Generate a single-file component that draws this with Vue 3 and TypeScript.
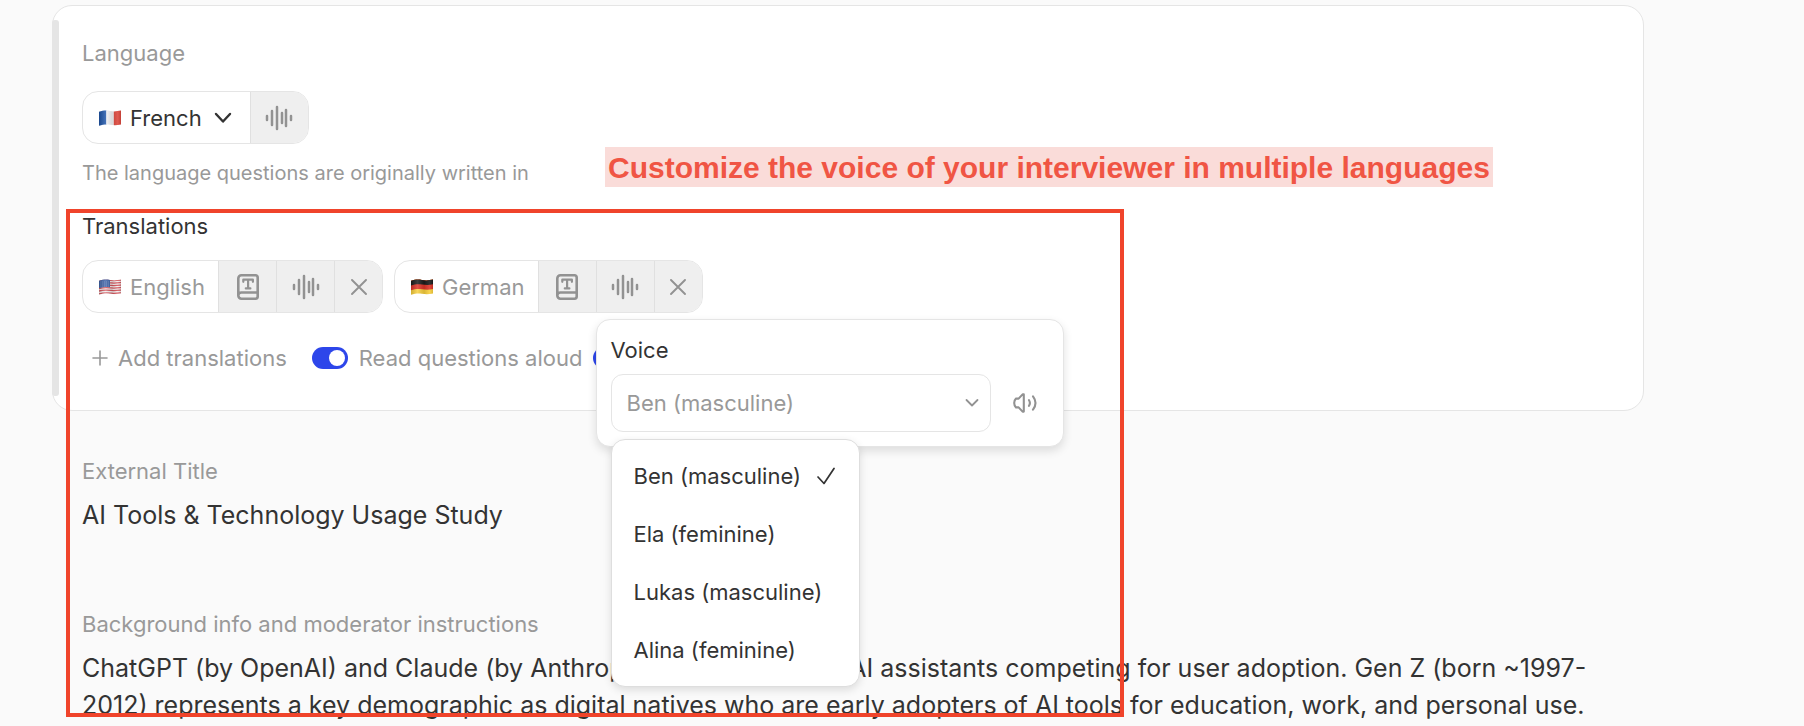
<script setup lang="ts">
import { ref } from 'vue'

type Flag = 'fr' | 'us' | 'de'

interface Translation {
  name: string
  flag: Flag
  voiceOpen: boolean
}

const translations: Translation[] = [
  { name: 'English', flag: 'us', voiceOpen: false },
  { name: 'German', flag: 'de', voiceOpen: true },
]

const voices: string[] = ['Ben (masculine)', 'Ela (feminine)', 'Lukas (masculine)', 'Alina (feminine)']

const voice = ref(voices[0])
const readAloud = ref(true)
const voiceAnswers = ref(true)

// Bars of the waveform icon: [x, half height]
const bars: [number, number][] = [
  [2, 2],
  [7, 7],
  [12, 11],
  [17, 5],
  [21, 8],
  [26, 2],
]
</script>

<template>
  <svg class="defs" aria-hidden="true">
    <defs>
      <clipPath id="wave-flag">
        <path d="M0 1.8C4 .6 7 .2 11 1S18 1.4 22 .6V14.4C18 15.4 15 15.4 11 14.8S4 14.6 0 15.8Z" />
      </clipPath>
      <linearGradient id="shade" x1="0" x2="1" y1="0" y2="0">
        <stop offset="0" stop-color="#000" stop-opacity=".16" />
        <stop offset=".3" stop-color="#fff" stop-opacity=".16" />
        <stop offset=".6" stop-color="#000" stop-opacity=".12" />
        <stop offset=".85" stop-color="#fff" stop-opacity=".1" />
        <stop offset="1" stop-color="#000" stop-opacity=".12" />
      </linearGradient>
      <symbol id="flag-fr" viewBox="0 0 22 16">
        <g clip-path="url(#wave-flag)">
          <rect width="7.4" height="16" fill="#1f55a8" />
          <rect x="7.4" width="7.4" height="16" fill="#f6f6f8" />
          <rect x="14.8" width="7.2" height="16" fill="#dc473c" />
          <rect width="22" height="16" fill="url(#shade)" />
        </g>
      </symbol>
      <symbol id="flag-us" viewBox="0 0 22 16">
        <g clip-path="url(#wave-flag)">
          <rect width="22" height="16" fill="#f3eeee" />
          <path
            d="M0 2C5 .6 8 1 12 1.4S18 1.5 22 1M0 4.5C5 3.1 8 3.5 12 3.9S18 4 22 3.5M0 7C5 5.6 8 6 12 6.4S18 6.5 22 6M0 9.5C5 8.1 8 8.5 12 8.9S18 9 22 8.5M0 12C5 10.6 8 11 12 11.4S18 11.5 22 11M0 14.8C5 13.4 8 13.8 12 14.2S18 14.3 22 13.8"
            fill="none"
            stroke="#d4535a"
            stroke-width="1.3"
          />
          <path d="M0 0H11V8.2C7 7.6 4 8 0 9Z" fill="#3e62a6" />
          <path d="M1.5 3H10M1.5 5H10M1.5 7H10" stroke="#b7c6e2" stroke-width=".6" stroke-dasharray=".7 1.2" />
          <rect width="22" height="16" fill="url(#shade)" />
        </g>
      </symbol>
      <symbol id="flag-de" viewBox="0 0 22 16">
        <g clip-path="url(#wave-flag)">
          <rect width="22" height="16" fill="#f8cf3c" />
          <path d="M0 0H22V10C18 11 15 10.8 11 10.3S4 10 0 11.2Z" fill="#dd3327" />
          <path d="M0 0H22V5.2C18 6.2 15 6 11 5.5S4 5.2 0 6.4Z" fill="#1b1b1b" />
          <rect width="22" height="16" fill="url(#shade)" />
        </g>
      </symbol>
      <symbol id="wave" viewBox="0 0 28 26">
        <path
          v-for="[x, h] in bars"
          :key="x"
          :d="`M${x} ${13 - h}V${13 + h}`"
          fill="none"
          stroke="currentColor"
          stroke-width="2.5"
          stroke-linecap="round"
        />
      </symbol>
      <symbol id="book" viewBox="0 0 22 26">
        <g fill="none" stroke="currentColor" stroke-linecap="round" stroke-linejoin="round">
          <path
            stroke-width="2.6"
            d="M1.3 21.6V4.4A3.1 3.1 0 0 1 4.4 1.3H18.6A2.1 2.1 0 0 1 20.7 3.4V22.6A2.1 2.1 0 0 1 18.6 24.7H4.4A3.1 3.1 0 0 1 4.4 18.5H20.7"
          />
          <path stroke-width="2.2" d="M6.3 7.8V5.7H15.9V7.8M11.1 5.7V14.4M8.8 14.4H13.4" />
        </g>
      </symbol>
    </defs>
  </svg>

  <main class="page">
    <section class="card">
      <h2 class="label muted">Language</h2>
      <div class="chip source">
        <button type="button" class="chip-main picker">
          <svg class="flag" aria-hidden="true"><use href="#flag-fr" /></svg>
          French
          <svg class="caret" viewBox="0 0 18 12" aria-hidden="true">
            <path d="M2 2L9 9.5L16 2" fill="none" stroke="currentColor" stroke-width="2.4" stroke-linecap="round" stroke-linejoin="round" />
          </svg>
        </button>
        <button type="button" class="tool" aria-label="French voice">
          <svg class="wave"><use href="#wave" /></svg>
        </button>
      </div>
      <p class="hint">The language questions are originally written in</p>

      <h2 class="label">Translations</h2>
      <div class="chips">
        <div v-for="t in translations" :key="t.name" class="chip">
          <span class="chip-main">
            <svg class="flag" aria-hidden="true"><use :href="`#flag-${t.flag}`" /></svg>
            {{ t.name }}
          </span>
          <button type="button" class="tool" :aria-label="`Edit ${t.name} text`">
            <svg class="book"><use href="#book" /></svg>
          </button>
          <div class="anchor">
            <button type="button" class="tool" :aria-label="`${t.name} voice`" :aria-expanded="t.voiceOpen">
              <svg class="wave"><use href="#wave" /></svg>
            </button>
            <div v-if="t.voiceOpen" class="popover">
              <label class="label" for="voice">Voice</label>
              <div class="voice-row">
                <div class="select">
                  <select id="voice" v-model="voice">
                    <option v-for="v in voices" :key="v" :value="v">{{ v }}</option>
                  </select>
                  <svg class="select-caret" viewBox="0 0 14 10" aria-hidden="true">
                    <path d="M1.5 2L7 7.5L12.5 2" fill="none" stroke="currentColor" stroke-width="1.8" stroke-linecap="round" stroke-linejoin="round" />
                  </svg>
                  <div class="menu" role="listbox" aria-label="Voices">
                    <button
                      v-for="v in voices"
                      :key="v"
                      type="button"
                      class="option"
                      role="option"
                      :aria-selected="v === voice"
                      @click="voice = v"
                    >
                      {{ v }}
                      <svg v-if="v === voice" class="check" viewBox="0 0 18 18" aria-hidden="true">
                        <path d="M1 10L7 16.5L17 1.5" fill="none" stroke="currentColor" stroke-width="1.7" stroke-linecap="round" stroke-linejoin="round" />
                      </svg>
                    </button>
                  </div>
                </div>
                <button type="button" class="preview" aria-label="Play voice sample">
                  <svg viewBox="0 0 24 20" aria-hidden="true">
                    <g fill="none" stroke="currentColor" stroke-width="2.1" stroke-linecap="round" stroke-linejoin="round">
                      <path d="M10.8 1.4V18.6H9.6L5.6 14.4H3Q1.2 12.6 1.2 10T3 5.6H5.6L9.6 1.4Z" />
                      <path d="M16 7.2Q17.8 10 16 12.8M20 3.4Q25 10 20 16.6" />
                    </g>
                  </svg>
                </button>
              </div>
            </div>
          </div>
          <button type="button" class="tool close" :aria-label="`Remove ${t.name}`">
            <svg class="cross" viewBox="0 0 16 16">
              <path d="M1 1L15 15M15 1L1 15" fill="none" stroke="currentColor" stroke-width="1.9" stroke-linecap="round" />
            </svg>
          </button>
        </div>
      </div>

      <div class="actions">
        <button type="button" class="add">
          <svg viewBox="0 0 16 16" aria-hidden="true">
            <path d="M8 1V15M1 8H15" fill="none" stroke="currentColor" stroke-width="1.6" stroke-linecap="round" />
          </svg>
          Add translations
        </button>
        <label class="switch">
          <input v-model="readAloud" type="checkbox" />
          Read questions aloud
        </label>
        <input v-model="voiceAnswers" type="checkbox" aria-label="Voice answers" />
      </div>
    </section>

    <section class="field">
      <h2 class="label muted">External Title</h2>
      <p class="value">AI Tools &amp; Technology Usage Study</p>
    </section>

    <section class="field">
      <h2 class="label muted">Background info and moderator instructions</h2>
      <p class="value">
        ChatGPT (by OpenAI) and Claude (by Anthropic) are two leading AI assistants competing for user adoption. Gen Z (born
        ~1997-2012) represents a key demographic as digital natives who are early adopters of AI tools for education, work,
        and personal use.
      </p>
    </section>

    <p class="callout">Customize the voice of your interviewer in multiple languages</p>
    <div class="frame" aria-hidden="true"></div>
  </main>
</template>

<style>
body {
  background: #fafafa;
}
</style>

<style scoped>
.defs {
  position: absolute;
  width: 0;
  height: 0;
}

.page {
  position: relative;
  box-sizing: border-box;
  padding: 5px 160px 0 52px;
  font-family: Inter, 'Liberation Sans', sans-serif;
  font-size: 22px;
  line-height: 28px;
  color: #333;
}

h2,
p {
  margin: 0;
}

button {
  padding: 0;
  border: 0;
  background: none;
  font: inherit;
  color: inherit;
  cursor: pointer;
}

svg {
  flex: none;
  display: block;
}

.label {
  display: block;
  font-size: 22px;
  font-weight: 400;
}

.muted {
  color: #999;
}

.card {
  position: relative;
  padding: 33px 29px 38px;
  border: 1px solid #e5e5e5;
  border-radius: 20px;
  background: #fff;
}

.card::before {
  content: '';
  position: absolute;
  left: -1px;
  top: 14px;
  bottom: 14px;
  width: 7px;
  border-radius: 3px;
  background: #e5e5e5;
}

.card > .label,
.chip-main,
.hint {
  white-space: nowrap;
}

.chip {
  display: flex;
  width: max-content;
  height: 51px;
  border: 1px solid #e5e5e5;
  border-radius: 16px;
  background: #fff;
}

.source {
  margin-top: 24px;
}

.chip-main {
  display: flex;
  align-items: center;
  gap: 9px;
  padding: 0 13px 0 16px;
  color: #999;
}

.picker {
  padding-right: 18px;
  color: #333;
}

.flag {
  width: 22px;
  height: 16px;
}

.caret {
  width: 18px;
  height: 12px;
  margin-left: 3px;
}

.tool {
  display: grid;
  place-items: center;
  box-sizing: border-box;
  width: 58px;
  height: 100%;
  border-left: 1px solid #e0e0e0;
  background: #efefef;
  color: #929292;
}

.tool:last-child {
  border-radius: 0 15px 15px 0;
}

.anchor > .tool {
  border-radius: 0;
}

.close {
  width: 48px;
}

.wave {
  width: 28px;
  height: 26px;
}

.book {
  width: 22px;
  height: 26px;
}

.cross {
  width: 16px;
  height: 16px;
}

.hint {
  margin: 15px 0 25px;
  font-size: 20px;
  color: #999;
}

.chips {
  display: flex;
  gap: 11px;
  margin-top: 20px;
}

.anchor {
  position: relative;
}

.popover {
  position: absolute;
  z-index: 2;
  left: 0;
  top: 58px;
  box-sizing: border-box;
  width: 468px;
  padding: 16px 14px 14px;
  border: 1px solid #e5e5e5;
  border-radius: 14px;
  background: #fff;
  box-shadow: 0 4px 10px rgba(0, 0, 0, 0.12);
}

.voice-row {
  display: flex;
  align-items: center;
  margin-top: 10px;
}

.select {
  position: relative;
  width: 380px;
}

select {
  appearance: none;
  display: block;
  width: 100%;
  height: 58px;
  padding: 0 40px 0 15px;
  border: 1px solid #e5e5e5;
  border-radius: 12px;
  background: #fff;
  font: inherit;
  color: #999;
}

.select-caret {
  position: absolute;
  right: 12px;
  top: 24px;
  width: 14px;
  height: 10px;
  color: #929292;
  pointer-events: none;
}

.preview {
  flex: 1;
  display: grid;
  place-items: center;
  height: 58px;
  padding-left: 10px;
  color: #929292;
}

.preview svg {
  width: 24px;
  height: 20px;
}

.menu {
  position: absolute;
  left: 0;
  top: 65px;
  box-sizing: border-box;
  width: 249px;
  padding: 7px;
  border: 1px solid #dedede;
  border-radius: 14px;
  background: #fff;
  box-shadow: 0 3px 8px rgba(0, 0, 0, 0.12);
}

.option {
  display: flex;
  align-items: center;
  justify-content: space-between;
  width: 100%;
  height: 58px;
  padding: 0 17px 0 15px;
  white-space: nowrap;
}

.check {
  width: 18px;
  height: 18px;
}

.actions {
  display: flex;
  align-items: center;
  margin-top: 31px;
  white-space: nowrap;
  color: #999;
}

.add {
  display: flex;
  align-items: center;
  gap: 10px;
  padding-left: 10px;
}

.add svg {
  width: 16px;
  height: 16px;
}

.switch {
  display: flex;
  align-items: center;
  gap: 11px;
  margin: 0 11px 0 25px;
}

input[type='checkbox'] {
  appearance: none;
  display: block;
  flex: none;
  box-sizing: border-box;
  width: 36px;
  height: 22px;
  margin: 0;
  padding: 3px;
  border-radius: 11px;
  background: #2d46ea;
}

input[type='checkbox']::before {
  content: '';
  display: block;
  width: 16px;
  height: 16px;
  margin-left: auto;
  border-radius: 50%;
  background: #fff;
}

.field {
  padding: 46px 0 0 30px;
}

.field + .field {
  padding-top: 76px;
}

.value {
  margin-top: 12px;
  font-size: 25px;
  line-height: 37px;
}

.callout {
  position: absolute;
  left: 605px;
  top: 147px;
  padding: 2px 3px 0;
  background: #fadcd9;
  font: bold 30px/38px 'Liberation Sans', Arial, sans-serif;
  white-space: nowrap;
  color: #f05544;
}

.frame {
  position: absolute;
  z-index: 3;
  left: 66px;
  top: 209px;
  bottom: 7px;
  box-sizing: border-box;
  width: 1058px;
  border: 4px solid #f0442b;
  pointer-events: none;
}
</style>
